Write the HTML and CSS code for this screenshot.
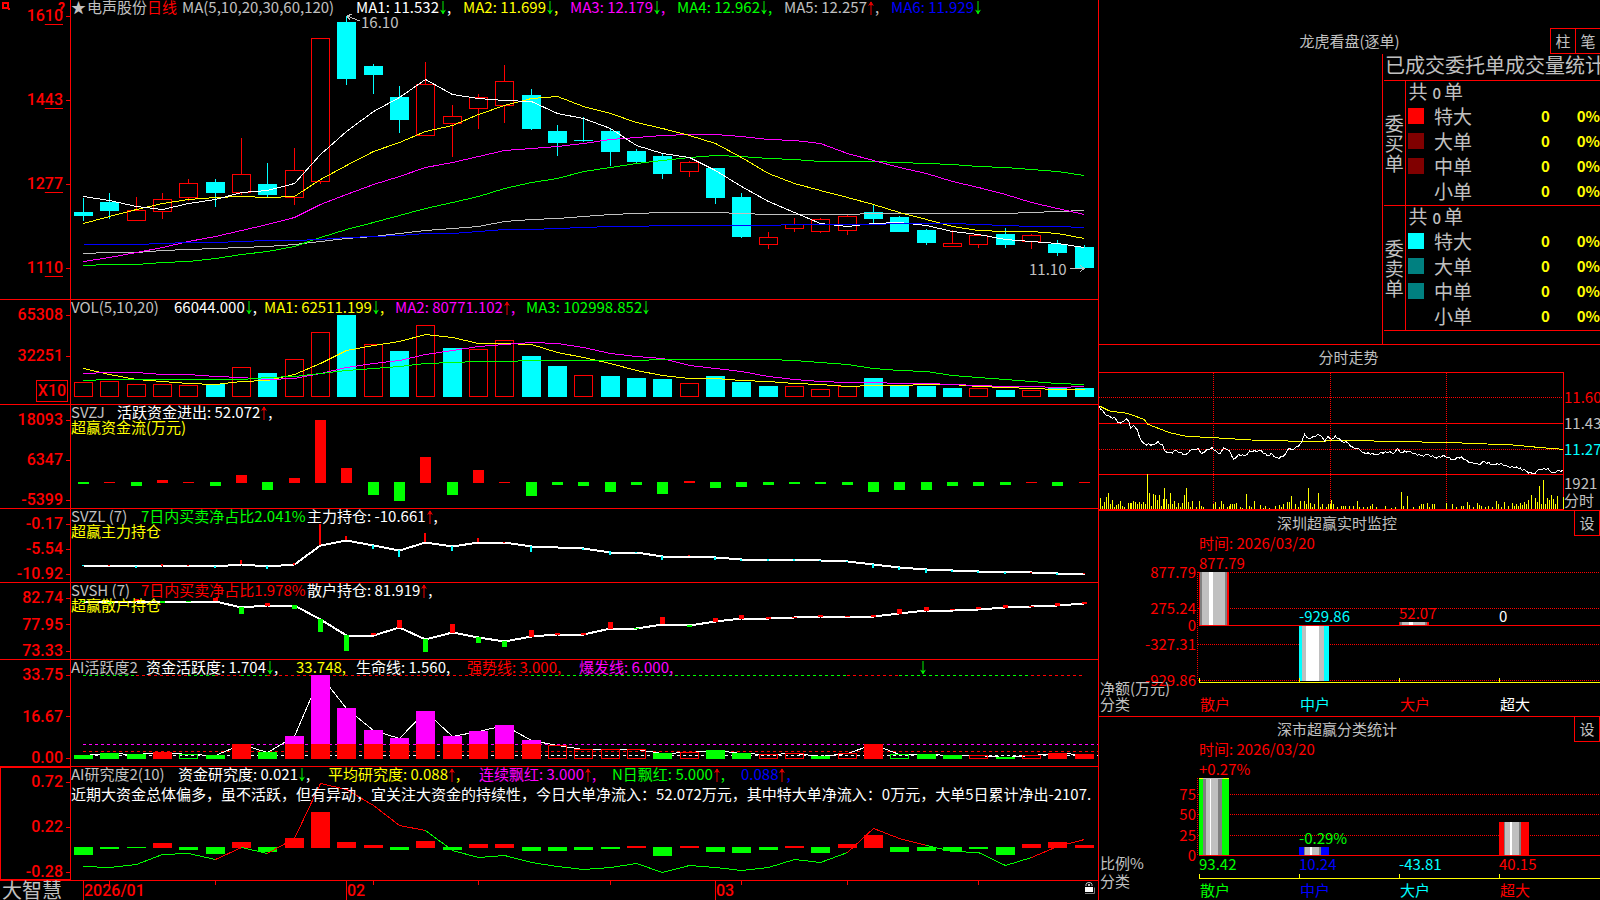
FILE: index.html
```html
<!DOCTYPE html>
<html lang="zh-CN">
<head>
<meta charset="utf-8">
<title>电声股份 日线</title>
<link rel="stylesheet" href="styles.css">
</head>
<body>
<svg class="defs" aria-hidden="true">
  <symbol id="down" viewBox="0 0 6 15"><path d="M3 0V14M0.5 9.5L3 13.5L5.5 9.5M1.5 11H4.5M2 12H4" fill="none" stroke="currentColor"/></symbol>
  <symbol id="up" viewBox="0 0 6 15"><path d="M3 15V1M0.5 5L3 1L5.5 5M1.5 4H4.5M2 3H4" fill="none" stroke="currentColor"/></symbol>
</svg>
<main class="app">
  <section class="left">
    <article class="panel">
      <div class="axis axis-price">
        <svg class="pin" viewBox="0 0 8 8" aria-hidden="true"><path d="M0 0H7V7H0ZM2 2V5H5V2Z" fill-rule="evenodd"/><path d="M6 6h2v2h-2z"/></svg>
        <b class="help">?</b>
        <span>16<u>10</u></span><span>14<u>43</u></span><span>12<u>77</u></span><span>11<u>10</u></span>
      </div>
      <div class="plot">
        <svg class="chart" id="price" viewBox="71 0 1027 299" preserveAspectRatio="none"></svg>
        <header class="head head-price gray">
          <span>★</span><span>电声股份</span><span class="red">日线</span><span>MA(5,10,20,30,60,120)</span>
          <span class="white">MA1: 11.532<svg class="arrow green"><use href="#down"/></svg>,</span>
          <span class="yellow">MA2: 11.699<svg class="arrow green"><use href="#down"/></svg>,</span>
          <span class="magenta">MA3: 12.179<svg class="arrow green"><use href="#down"/></svg>,</span>
          <span class="green">MA4: 12.962<svg class="arrow green"><use href="#down"/></svg>,</span>
          <span>MA5: 12.257<svg class="arrow red"><use href="#up"/></svg>,</span>
          <span class="blue">MA6: 11.929<svg class="arrow green"><use href="#down"/></svg></span>
        </header>
      </div>
    </article>

    <article class="panel">
      <div class="axis axis-vol"><span>65308</span><span>32251</span><strong>X10</strong></div>
      <div class="plot">
        <svg class="chart" id="vol" viewBox="71 300 1027 104" preserveAspectRatio="none"></svg>
        <header class="head head-vol gray">
          <span>VOL(5,10,20)</span>
          <span class="white">66044.000<svg class="arrow green"><use href="#down"/></svg>,</span>
          <span class="yellow">MA1: 62511.199<svg class="arrow green"><use href="#down"/></svg>,</span>
          <span class="magenta">MA2: 80771.102<svg class="arrow red"><use href="#up"/></svg>,</span>
          <span class="green">MA3: 102998.852<svg class="arrow green"><use href="#down"/></svg></span>
        </header>
      </div>
    </article>

    <article class="panel">
      <div class="axis"><span>18093</span><span>6347</span><span>-5399</span></div>
      <div class="plot">
        <svg class="chart" id="flow" viewBox="71 405 1027 103" preserveAspectRatio="none"></svg>
        <header class="head head-flow gray">
          <span>SVZJ</span><span class="white">活跃资金进出: 52.072<svg class="arrow red"><use href="#up"/></svg>,</span>
        </header>
        <p class="sub yellow">超赢资金流(万元)</p>
      </div>
    </article>

    <article class="panel">
      <div class="axis"><span>-0.17</span><span>-5.54</span><span>-10.92</span></div>
      <div class="plot">
        <svg class="chart" id="main-hold" viewBox="71 509 1027 73" preserveAspectRatio="none"></svg>
        <header class="head head-hold gray">
          <span>SVZL (7)</span><span class="green">7日内买卖净占比2.041%</span><span class="white">主力持仓: -10.661<svg class="arrow red"><use href="#up"/></svg>,</span>
        </header>
        <p class="sub yellow">超赢主力持仓</p>
      </div>
    </article>

    <article class="panel">
      <div class="axis"><span>82.74</span><span>77.95</span><span>73.33</span></div>
      <div class="plot">
        <svg class="chart" id="retail-hold" viewBox="71 583 1027 76" preserveAspectRatio="none"></svg>
        <header class="head head-hold gray">
          <span>SVSH (7)</span><span class="red">7日内买卖净占比1.978%</span><span class="white">散户持仓: 81.919<svg class="arrow red"><use href="#up"/></svg>,</span>
        </header>
        <p class="sub yellow">超赢散户持仓</p>
      </div>
    </article>

    <article class="panel">
      <div class="axis"><span>33.75</span><span>16.67</span><span>0.00</span></div>
      <div class="plot">
        <svg class="chart" id="active" viewBox="71 660 1027 106" preserveAspectRatio="none"></svg>
        <header class="head head-active gray">
          <span>AI活跃度2</span>
          <span class="white">资金活跃度: 1.704<svg class="arrow green"><use href="#down"/></svg>,</span>
          <span class="yellow">33.748,</span><span class="white">生命线: 1.560,</span>
          <span class="red">强势线: 3.000,</span><span class="magenta">爆发线: 6.000,</span>
          <span><svg class="arrow green"><use href="#down"/></svg></span>
        </header>
      </div>
    </article>

    <article class="panel">
      <div class="axis selected"><span>0.72</span><span>0.22</span><span>-0.28</span></div>
      <div class="plot">
        <svg class="chart" id="research" viewBox="71 767 1027 113" preserveAspectRatio="none"></svg>
        <header class="head head-research gray">
          <span>AI研究度2(10)</span>
          <span class="white">资金研究度: 0.021<svg class="arrow green"><use href="#down"/></svg>,</span>
          <span class="yellow">平均研究度: 0.088<svg class="arrow red"><use href="#up"/></svg>,</span>
          <span class="magenta">连续飘红: 3.000<svg class="arrow red"><use href="#up"/></svg>,</span>
          <span class="green">N日飘红: 5.000<svg class="arrow red"><use href="#up"/></svg>,</span>
          <span class="blue">0.088<svg class="arrow red"><use href="#up"/></svg>,</span>
        </header>
        <p class="sub note white">近期大资金总体偏多，虽不活跃，但有异动，宜关注大资金的持续性，今日大单净流入：52.072万元，其中特大单净流入：0万元，大单5日累计净出-2107.</p>
      </div>
    </article>

    <footer class="dates">
      <span class="brand gray">大智慧</span>
      <div class="plot">
        <svg class="chart" id="dates" viewBox="71 881 1027 19" preserveAspectRatio="none">
          <text class="date" x="84" y="896">2026/01</text>
          <text class="date" x="347" y="896">02</text>
          <text class="date" x="716" y="896">03</text>
          <path d="M1086 886V884.5Q1086 882.5 1089 882.5T1092 884.5V886" fill="none" stroke="#c0c0c0"/>
          <path d="M1088 884h2v2h-2z" fill="#c0c0c0"/>
          <path d="M1085 893.5h9.500v-6" fill="none" stroke="#808080"/>
          <path d="M1085 887h8v5h-8z" fill="#fff"/>
        </svg>
      </div>
    </footer>
  </section>

  <aside class="right">
    <section class="orders">
      <div class="orders-bar">
        <h2>龙虎看盘(逐单)</h2>
        <div class="buttons"><button type="button">柱</button><button type="button">笔</button></div>
      </div>
      <div class="orders-table">
        <h3 id="orders-title">已成交委托单成交量统计</h3>
        <table aria-labelledby="orders-title">
          <colgroup><col class="c-side"><col class="c-mark"><col class="c-name"><col class="c-num"><col class="c-pct"></colgroup>
          <tbody>
            <tr><th rowspan="5" class="side">委买单</th><td colspan="4" class="total">共<b>0</b>单</td></tr>
            <tr><td><i class="mark m-red"></i></td><td>特大</td><td class="num">0</td><td class="num">0%</td></tr>
            <tr><td><i class="mark m-dred"></i></td><td>大单</td><td class="num">0</td><td class="num">0%</td></tr>
            <tr><td><i class="mark m-dred"></i></td><td>中单</td><td class="num">0</td><td class="num">0%</td></tr>
            <tr><td></td><td>小单</td><td class="num">0</td><td class="num">0%</td></tr>
          </tbody>
          <tbody>
            <tr><th rowspan="5" class="side">委卖单</th><td colspan="4" class="total">共<b>0</b>单</td></tr>
            <tr><td><i class="mark m-cyan"></i></td><td>特大</td><td class="num">0</td><td class="num">0%</td></tr>
            <tr><td><i class="mark m-teal"></i></td><td>大单</td><td class="num">0</td><td class="num">0%</td></tr>
            <tr><td><i class="mark m-teal"></i></td><td>中单</td><td class="num">0</td><td class="num">0%</td></tr>
            <tr><td></td><td>小单</td><td class="num">0</td><td class="num">0%</td></tr>
          </tbody>
        </table>
      </div>
    </section>

    <section class="intraday">
      <h2>分时走势</h2>
      <div class="intraday-body">
        <svg id="intraday" viewBox="1099 372 465 138" preserveAspectRatio="none"></svg>
        <ul class="scale">
          <li class="red">11.60</li><li class="gray">11.43</li><li class="cyan">11.27</li><li class="gray">1921</li><li class="gray">分时</li>
        </ul>
      </div>
    </section>

    <section class="stat">
      <div class="stat-bar"><h2>深圳超赢实时监控</h2><button type="button">设</button></div>
      <svg id="monitor" viewBox="1099 535 501 181" preserveAspectRatio="xMinYMin meet"></svg>
    </section>

    <section class="stat">
      <div class="stat-bar"><h2>深市超赢分类统计</h2><button type="button">设</button></div>
      <svg id="classes" viewBox="1099 741 501 159" preserveAspectRatio="xMinYMin meet"></svg>
    </section>
  </aside>
</main>
<script src="charts.js"></script>
</body>
</html>
```

FILE: styles.css
```css
* { box-sizing: border-box; margin: 0; padding: 0; }
body {
  background: #000;
  color: #c0c0c0;
  font: 15px/16px "Noto Sans CJK SC", "Liberation Sans", sans-serif;
  overflow: hidden;
}
.defs { display: none; }
.app {
  display: grid;
  grid-template-columns: minmax(0, 1098fr) minmax(0, 502fr);
  height: 100vh;
}
.red { color: #f00; }
.green { color: #0f0; }
.blue { color: #00f; }
.yellow { color: #ff0; }
.magenta { color: #f0f; }
.cyan { color: #0ff; }
.white { color: #fff; }
.gray { color: #c0c0c0; }

/* left: indicator panels */
.left {
  display: grid;
  grid-template-rows: 300fr 105fr 104fr 74fr 77fr 107fr 114fr 19fr;
  min-height: 0;
}
.panel {
  display: grid;
  grid-template-columns: 71px minmax(0, 1fr);
  min-height: 0;
  border-bottom: 1px solid #f00;
}
.axis {
  display: flex;
  flex-direction: column;
  justify-content: space-between;
  position: relative;
  min-height: 0;
  padding-top: 7px;
  border-right: 1px solid #f00;
  color: #f00;
  font: 500 16px/16px Roboto, "Liberation Sans", sans-serif;
}
.axis span { display: flex; justify-content: flex-end; align-items: center; }
.axis span::after { content: ""; width: 4px; height: 1px; margin-left: 3px; background: #f00; }
.axis u { text-underline-offset: 3px; text-decoration-thickness: 1px; }
.axis-price { padding: 8px 0 23px; }
.pin { position: absolute; left: 2px; top: 2px; width: 8px; height: 8px; fill: #f00; }
.help { position: absolute; right: 5px; top: 0; font-size: 14px; }
.axis-vol { justify-content: flex-start; }
.axis-vol span + span { margin-top: 25px; }
.axis-vol strong {
  align-self: flex-end;
  width: 32px;
  margin: 16px 2px 0 0;
  border: 1px solid #f00;
  font-weight: 500;
  line-height: 20px;
  text-align: center;
}
.selected { outline: 1px solid #f00; outline-offset: -1px; }
.plot { position: relative; min-width: 0; min-height: 0; overflow: hidden; }
.chart { position: absolute; inset: 0; width: 100%; height: 100%; }
.head, .sub { position: relative; white-space: nowrap; }
.head { display: grid; grid-auto-flow: column; justify-content: start; height: 15px; line-height: 14px; }
.arrow { display: inline-block; width: 6px; height: 14px; margin: 0 1px; vertical-align: -2px; }
.sub { line-height: 14px; }
.note { margin-top: 3px; line-height: 18px; }
.head-price { grid-template-columns: 16px 60px 35px 174px 107px 107px 107px 107px 107px auto; }
.head-vol { grid-template-columns: 103px 90px 131px 131px auto; }
.head-flow { grid-template-columns: 46px auto; }
.head-hold { grid-template-columns: 70px 166px auto; }
.head-active { grid-template-columns: 75px 150px 60px 111px 112px 340px auto; }
.head-research { grid-template-columns: 107px 150px 151px 133px 129px auto; }
.dates { display: grid; grid-template-columns: 71px minmax(0, 1fr); min-height: 0; }
.brand { padding-left: 2px; font-size: 20px; line-height: 17px; }
.date { fill: #f00; font: 500 16px Roboto, "Liberation Sans", sans-serif; }

/* right: order statistics */
.right {
  display: grid;
  grid-template-rows: 345fr 166fr 206fr 183fr;
  min-height: 0;
  border-left: 1px solid #f00;
}
.right section { min-height: 0; overflow: hidden; }
h2 { font-size: 15px; font-weight: 400; text-align: center; }
button {
  width: 26px;
  height: 26px;
  border: 1px solid #f00;
  background: #000;
  color: #c0c0c0;
  font: inherit;
  line-height: 22px;
}
.orders { display: flex; flex-direction: column; border-bottom: 1px solid #f00; }
.orders-bar { position: relative; flex: none; height: 54px; padding-top: 32px; }
.orders-bar h2 { line-height: 17px; }
.buttons { position: absolute; right: -1px; top: 28px; display: flex; }
.buttons button + button { margin-left: -1px; }
.orders-table { flex: 1; width: 218px; margin-left: auto; padding-left: 1px; border-left: 1px solid #f00; overflow: hidden; }
table { width: 100%; table-layout: fixed; border-collapse: collapse; font-size: 19px; line-height: 20px; }
h3 { height: 26px; padding-left: 1px; font-size: 20px; font-weight: 400; line-height: 22px; white-space: nowrap; }
tbody { border-top: 1px solid #f00; border-bottom: 1px solid #f00; }
tr { height: 25px; }
td { vertical-align: top; }
.side { border-right: 1px solid #f00; font-weight: 400; word-break: break-all; }
.total { padding-left: 3px; }
.total b { margin: 0 3px 0 5px; font-size: 15px; font-weight: 500; }
.c-side { width: 21px; }
.c-mark { width: 29px; }
.c-name { width: 45px; }
.c-pct { width: 50px; }
.mark { display: block; width: 16px; height: 16px; margin: 2px 0 0 2px; }
.m-red { background: #f00; }
.m-dred { background: #800000; }
.m-cyan { background: #0ff; }
.m-teal { background: #008080; }
.num { color: #ff0; font: 700 15px/20px "Noto Sans CJK SC", sans-serif; text-align: right; }

/* right: intraday */
.intraday { display: flex; flex-direction: column; border-bottom: 1px solid #f00; }
.intraday h2 { flex: none; height: 27px; padding-right: 2px; line-height: 23px; }
.intraday-body {
  display: grid;
  grid-template-columns: minmax(0, 1fr) 36px;
  grid-template-rows: minmax(0, 1fr);
  flex: 1;
  min-height: 0;
}
.intraday-body svg { width: 100%; height: 100%; }
.scale { list-style: none; padding-top: 15px; white-space: nowrap; }
.scale li { height: 26px; line-height: 20px; }
.scale li:nth-child(3) { height: 34px; }
.scale li:nth-child(4) { height: 17px; }
.scale li:nth-child(5) { height: 20px; }

/* right: category statistics */
.stat { display: flex; flex-direction: column; }
.stat:not(:last-child) { border-bottom: 1px solid #f00; }
.stat-bar { position: relative; flex: none; height: 24px; }
.stat-bar h2 { padding-right: 25px; line-height: 24px; }
.stat-bar button { position: absolute; right: 0; top: -1px; }
.stat svg { flex: 1; width: 100%; min-height: 0; }
svg text { font-size: 15px; }
svg .date { font-size: 16px; }
```

FILE: charts.js
```javascript
const NS = 'http://www.w3.org/2000/svg';
const C = { r: '#f00', g: '#0f0', c: '#0ff', m: '#f0f', w: '#fff', y: '#ff0', b: '#00f', s: '#c0c0c0', d: '#808080' };

function add(svg, tag, attrs, text) {
  const el = document.createElementNS(NS, tag);
  for (const k in attrs) el.setAttribute(k, attrs[k]);
  if (text !== undefined) el.textContent = text;
  svg.append(el);
  return el;
}
const get = id => document.getElementById(id);
const day = i => Math.round(83 + 26.33 * i);
const box = (svg, x, y, w, h, fill) => add(svg, 'rect', { x, y, width: w, height: h, fill, 'shape-rendering': 'crispEdges' });
const frame = (svg, x, y, w, h, stroke) => add(svg, 'rect', {
  x: x + 0.5, y: y + 0.5, width: w - 1, height: h - 1, fill: 'none', stroke, 'shape-rendering': 'crispEdges' });
const path = (svg, pts, stroke, more = {}) => add(svg, 'polyline', {
  points: pts.map(p => p.join()).join(' '), fill: 'none', stroke, 'shape-rendering': 'crispEdges', ...more });
const series = (svg, ys, stroke, more) => path(svg, ys.map((y, i) => [day(i) + 0.5, y + 0.5]), stroke, more);

/* daily candles: kind, body top, body bottom, high, low */
const candles = `c212,216,198,221 c202,211,193,219 r210,220,197,221 r199,211,193,219 r183,197,179,201 c182,193,179,207
r174,192,138,195 c184,195,163,197 r170,197,148,205 r38,181,38,184 c22,79,16,85 c66,75,64,94 c97,120,86,133
r84,135,62,135 r116,123,105,157 r97,108,94,129 r81,105,65,123 c95,129,89,130 c131,143,125,156 c140,141,117,142
c131,152,128,166 c151,162,149,163 c156,174,153,179 r162,171,161,177 c168,198,168,204 c197,237,193,238
r237,244,232,249 r224,228,218,232 r219,231,218,233 r216,230,215,235 c212,219,204,223 c217,232,216,232
c230,243,229,245 r243,246,230,247 r235,244,235,248 c234,245,228,248 r235,241,234,249 c244,253,240,256
c247,268,245,268`.split(/\s+/);
const price = get('price');
candles.forEach((s, i) => {
  const [t, b, hi, lo] = s.slice(1).split(',').map(Number);
  const x = day(i), col = C[s[0]];
  if (s[0] === 'c') {
    box(price, x, hi, 1, lo - hi, col);
    box(price, x - 9, t, 19, b - t, col);
  } else {
    box(price, x, hi, 1, t - hi, col);
    box(price, x, b, 1, lo - b, col);
    frame(price, x - 9, t, 19, b - t + 1, col);
  }
});
series(price, [253,252,252,250,249,248,247,246,244,241,238,236,233,230,228,226,221,219,218,216,214,213,212,212,212,213,214,214,214,214,213,213,213,213,213,213,212,211,210], C.s);
series(price, [265,264,264,262,261,258,254,251,246,237,229,222,215,208,202,196,188,182,178,171,167,163,160,157,155,156,158,159,161,161,161,162,163,164,166,167,169,171,175], C.g);
series(price, [261,257,252,247,241,236,230,224,217,204,194,184,176,167,162,156,150,148,146,143,139,137,135,134,134,136,139,140,143,153,160,167,173,181,187,194,202,208,214], C.m);
series(price, [223,216,209,203,199,197,196,197,196,179,165,151,142,131,125,114,105,98,96,106,113,122,128,135,143,157,173,183,190,197,204,212,219,226,230,231,231,233,238], C.y);
series(price, [196,200,206,209,203,199,192,190,183,154,131,111,97,79,94,98,100,101,113,118,128,145,153,157,170,186,201,212,223,226,223,222,225,231,234,239,241,243,247], C.w);
series(price, [244,244,244,243,242,242,241,240,240,239,237,236,235,233,233,231,229,229,228,227,226,226,225,225,225,225,225,224,224,224,224,223,223,223,224,225,226,226,227], C.b);
path(price, [[360, 21], [347, 16]], C.s);
path(price, [[352, 14], [347, 16], [350, 20]], C.s);
path(price, [[1070, 268.5], [1084, 268.5]], C.s);
path(price, [[1080, 265], [1084, 268.5], [1080, 272]], C.s);
add(price, 'text', { x: 361, y: 28, fill: C.s }, '16.10');
add(price, 'text', { x: 1029, y: 275, fill: C.s }, '11.10');

/* volume */
const vol = get('vol');
`r382 r381 r384 r384 r385 c384 r367 c373 r359 r332 c315 r344 c351 r325 c348 r349 r340 c356 c366 r375 c376 c378 c379
r383 c376 c382 c386 r386 r389 r386 c378 c386 c386 c388 r388 c390 r390 c388 c388`.split(/\s+/).forEach((s, i) => {
  const y = +s.slice(1);
  (s[0] === 'r' ? frame : box)(vol, day(i) - 9, y, 19, 397 - y, C[s[0]]);
});
series(vol, [368,374,379,381,383,384,381,380,374,363,350,345,341,334,337,343,343,344,352,357,363,370,375,378,378,380,381,383,384,386,385,385,384,384,386,387,388,389,389], C.y);
series(vol, [373,372,372,374,374,376,377,379,378,373,367,363,360,354,350,346,344,342,343,347,353,356,358,365,368,371,376,379,381,382,382,383,383,384,385,386,386,387,386], C.m);
series(vol, [380,379,379,379,379,379,379,377,376,373,370,368,366,363,362,361,361,360,360,360,360,360,359,359,359,359,359,360,362,364,368,370,371,375,377,379,381,383,384], C.g);

/* bars on a zero line: red ones end one pixel under it */
function zeroBars(svg, text, zero, width) {
  text.split(/\s+/).forEach((s, i) => {
    const y = +s.slice(1), x = day(i) - (width - 1) / 2;
    if (s[0] === 'r') box(svg, x, y, width, zero + 1 - y, C.r);
    else box(svg, x, zero, width, y - zero, C.g);
  });
}
zeroBars(get('flow'), `g484 r482 g486 r480 r482 g486 r475 g490 r478 r420 r468 g495 g501 r457 g495 r470 r482 g496 g485 g486
g492 g485 g494 r481 g488 g487 g485 g484 g484 g485 g492 g490 g490 g486 g486 g485 r482 g486 r482`, 482, 11);

/* holdings */
function ticks(svg, text, w) {
  text.split(/\s+/).forEach(s => {
    const [i, a, b] = s.slice(1).split(',').map(Number);
    box(svg, day(i) - (w >> 1), a, w, b - a, C[s[0]]);
  });
}
const mh = get('main-hold');
series(mh, [565,565,566,565,565,566,564,566,564,545,540,545,550,542,546,542,542,546,547,548,552,552,556,556,557,559,559,559,560,561,564,567,569,570,571,571,572,573,573], C.w, { 'stroke-width': 2 });
ticks(mh, `r9,524,545 r10,536,540 r13,533,542 r15,538,542 r6,560,564 c11,545,549 c12,550,557 c14,546,551 c17,546,552
c20,551,555 c22,556,560 c24,557,560 c30,564,568 c31,567,570 c32,569,573 c7,566,569 c0,565,566 c2,566,568 c5,566,568
c19,548,550 c25,559,561 c26,559,561 c27,559,561 c34,571,573 c35,572,574 c37,573,575 r1,565,566 r3,564,566 r4,565,566
r8,563,565 r16,542,543 r23,555,556 r36,572,573 r38,573,574 c21,552,553 c28,560,561 c29,561,562 c33,570,572`, 2);
const rh = get('retail-hold');
series(rh, [601,602,601,601,601,601,607,605,605,619,635,635,627,639,632,637,641,636,634,634,628,628,624,625,621,618,618,617,616,616,616,613,610,610,609,607,606,605,603], C.w, { 'stroke-width': 2 });
ticks(rh, `g6,607,614 g9,619,632 g10,635,651 g13,639,652 g15,637,643 g16,641,647 g8,605,609 r2,599,601 r5,598,601
r7,603,606 r12,620,628 r14,624,633 r17,630,637 r18,633,635 r19,633,635 r20,622,629 r22,617,624 r24,618,622 r25,615,619
r26,617,619 r28,615,617 r30,615,617 r31,609,614 r32,607,611 r34,607,609 r35,605,608 r37,603,606 r38,602,604 g0,601,602
g1,602,604 g3,601,603 g4,601,602 g21,628,629 g23,625,627 r11,633,635 r27,617,618 r29,616,617 r33,609,610 r36,606,607`, 5);

/* activity: upper case letters are hollow bars */
const act = get('active');
const dash = { 'stroke-dasharray': '3 3' };
[[0, 2, 'g'], [2, 4, 'r'], [4, 5, 'g'], [5, 6, 'r'], [6, 7, 'g'], [7, 17, 'r'], [17, 29, 'g'], [29, 31, 'r'], [31, 36, 'g'], [36, 38, 'r']]
  .forEach(([a, b, c]) => path(act, [[day(a), 675.5], [day(b), 675.5]], C[c], dash));
path(act, [[83, 744.5], [1098, 744.5]], C.m, dash);
path(act, [[83, 751.5], [1098, 751.5]], C.r, dash);
path(act, [[83, 755.5], [1098, 755.5]], C.w, dash);
const bars = `g755 g753 g754 r752 G754 g755 r744 g752 m736 m675 m708 m730 m738 m711 m736 m731 m725 m740 R745 R749 R749 R749
g753 R752 g750 g753 R754 R753 g756 R753 r744 G754 g754 g755 R755 g757 R755 r753 r754`.split(/\s+/);
series(act, bars.map(s => +s.slice(1)), C.w);
bars.forEach((s, i) => {
  const y = +s.slice(1), x = day(i) - 9, k = s[0];
  if (k === 'R' || k === 'G') frame(act, x, y, 19, 759 - y, C[k.toLowerCase()]);
  else box(act, x, y, 19, 759 - y, C[k]);
  if (k === 'm') box(act, x, 744, 19, 15, C.r);
});

/* research */
const res = get('research');
zeroBars(res, `g855 g849 g848 r843 g850 g854 r842 g852 r838 r812 r842 r845 g850 r841 g850 r844 r844 g851 g851 g850 g849 r846
g856 r846 g852 g853 g850 r846 g853 r844 r835 g852 g851 g851 g849 g855 r844 r842 r845`, 847, 19);
const trend = [866,867,864,854,853,859,847,853,838,783,789,805,825,830,850,857,855,862,866,869,867,863,872,865,867,870,867,859,862,852,828,838,845,851,852,865,857,846,839];
[[0, 5, 'g'], [5, 6, 'r'], [6, 7, 'g'], [7, 13, 'r'], [13, 29, 'g'], [29, 32, 'r'], [32, 36, 'g'], [36, 38, 'r']].forEach(([a, b, c]) =>
  path(res, trend.slice(a, b + 1).map((y, k) => [day(a + k) + 0.5, y + 0.5]), C[c]));

/* date marks */
const dates = get('dates');
[0, 10, 24].forEach(i => box(dates, day(i), 881, 1, 19, C.r));
[1, 5, 11, 15, 20, 25, 29, 34].forEach(i => box(dates, day(i), 881, 1, 4, C.r));

/* intraday; source data is on a grid three times finer than the drawing */
const fine = s => s.split(' ').map(p => { const [x, y] = p.split(',').map(Number); return [1098 + x / 3, 340 + y / 3]; });
const intra = get('intraday');
const dots = { 'stroke-dasharray': '1 1' };
frame(intra, 1098, 372, 466, 138, C.r);
[423, 474].forEach(y => box(intra, 1099, y, 465, 1, C.r));
[397.5, 449.5].forEach(y => path(intra, [[1099, y], [1563, y]], C.r, dots));
[1213.5, 1330.5, 1446.5].forEach(x => path(intra, [[x, 373], [x, 509]], C.r, dots));
fine('7,474 13,498 19,486 25,471 31,459 37,492 43,480 49,502 55,495 61,492 67,483 73,498 79,502 91,489 97,489 100,489 106,483 112,486 118,492 124,486 130,492 136,486 142,492 148,402 154,459 160,498 166,462 172,465 178,480 184,465 190,498 196,477 199,444 205,477 211,492 217,459 223,492 229,483 235,500 241,489 247,501 253,489 259,465 265,444 271,486 277,500 283,483 295,502 305,483 310,498 317,502 346,492 352,486 364,502 370,483 376,492 388,502 394,498 397,492 403,492 409,492 415,489 427,501 433,503 445,462 454,498 460,502 469,483 487,495 496,503 502,498 514,503 532,498 544,495 550,502 556,492 568,486 574,486 580,468 592,492 601,500 607,483 619,483 625,492 631,444 637,489 643,500 649,492 661,459 667,500 673,492 685,500 691,492 697,492 700,480 706,492 718,502 730,498 736,498 742,498 754,498 766,498 778,483 784,500 796,502 808,502 817,498 823,492 835,502 862,498 880,503 892,502 910,456 916,498 928,468 946,502 964,498 970,492 976,492 988,489 994,500 1003,492 1009,492 1045,489 1063,492 1075,502 1090,498 1096,498 1108,486 1114,495 1126,500 1138,489 1144,495 1150,498 1162,502 1172,498 1184,500 1195,483 1201,492 1210,500 1219,486 1231,498 1243,489 1249,498 1255,492 1261,498 1267,489 1273,495 1279,486 1285,492 1291,480 1300,465 1312,474 1318,486 1324,438 1330,492 1336,420 1342,492 1348,474 1354,480 1360,465 1366,477 1372,492 1378,468 1396,470')
  .forEach(([x, y]) => box(intra, Math.floor(x), Math.round(y), 1, 509 - Math.round(y), C.y));
path(intra, fine('2,197 35,213 88,220 138,238 150,253 215,278 265,289 345,293 460,300 570,303 685,303 775,302 925,305 1065,308 1245,315 1320,322 1395,328'), C.y);
const minute = fine('2,198 20,220 38,232 50,232 60,247 75,245 85,237 92,243 98,265 107,257 118,270 130,303 140,312 165,313 180,305 193,313 200,332 217,338 235,332 262,343 283,328 300,325 310,340 325,330 342,323 355,333 367,340 377,323 385,328 395,333 407,357 422,343 440,347 455,333 490,332 508,347 520,340 537,353 555,350 572,325 580,328 600,320 610,307 620,283 635,297 645,290 660,283 670,288 680,303 690,290 700,298 712,288 730,303 750,308 765,322 785,328 798,338 835,342 862,335 890,338 898,325 908,338 920,332 940,337 970,347 990,343 1010,352 1040,348 1065,357 1090,350 1110,365 1140,372 1160,365 1185,373 1210,370 1230,380 1255,380 1285,393 1305,402 1325,387 1350,386 1365,398 1380,391 1396,391');
const walk = [];
minute.forEach((p, i) => {
  walk.push(p);
  const q = minute[i + 1];
  if (!q) return;
  const n = Math.floor((q[0] - p[0]) / 2);
  for (let k = 1; k < n; k++) {
    walk.push([p[0] + (q[0] - p[0]) * k / n, p[1] + (q[1] - p[1]) * k / n + (k % 2 ? 1 : -0.5)]);
  }
});
path(intra, walk, C.w);

/* category charts */
function column(svg, x, y, h, stripes) {
  stripes.split(' ').forEach(s => {
    const w = +s.slice(1);
    box(svg, x, y, w, h, C[s[0]]);
    x += w;
  });
}
const label = (svg, x, y, t, c, anchor = 'start') => add(svg, 'text', { x, y: y + 5, fill: C[c], 'text-anchor': anchor }, t);
function base(svg, y) {
  box(svg, 1199, y, 401, 1, C.y);
  [1199, 1299, 1399, 1499].forEach(x => box(svg, x, y - 4, 1, 4, C.y));
}
const mon = get('monitor');
label(mon, 1199, 544, '时间: 2026/03/20', 'r');
[[573, '877.79'], [609, '275.24'], [626, '0'], [645, '-327.31'], [681, '-929.86']].forEach(([y, t]) => label(mon, 1196, y, t, 'r', 'end'));
[572.5, 608.5, 644.5, 680.5].forEach(y => path(mon, [[1198, y], [1600, y]], C.r, dots));
path(mon, [[1197.5, 572], [1197.5, 680]], C.r, dots);
column(mon, 1199, 572, 53, 'r1 d2 s7 w4 s12 d2 r2');
column(mon, 1299, 626, 55, 'c3 s4 w13 s5 c5');
column(mon, 1399, 622, 3, 'r1 d2 s7 w4 s12 d2 r2');
box(mon, 1199, 625, 401, 1, C.r);
label(mon, 1199, 564, '877.79', 'r');
label(mon, 1299, 617, '-929.86', 'c');
label(mon, 1399, 614, '52.07', 'r');
label(mon, 1499, 617, '0', 'w');
base(mon, 682);
label(mon, 1100, 689, '净额(万元)', 's');
label(mon, 1100, 705, '分类', 's');
[['散户', 'r'], ['中户', 'c'], ['大户', 'r'], ['超大', 'w']].forEach(([t, c], i) => label(mon, 1200 + 100 * i, 705, t, c));

const cls = get('classes');
label(cls, 1199, 750, '时间: 2026/03/20', 'r');
[[795, '75'], [815, '50'], [836, '25'], [856, '0']].forEach(([y, t]) => label(cls, 1196, y, t, 'r', 'end'));
[794.5, 814.5, 835.5].forEach(y => path(cls, [[1198, y], [1600, y]], C.r, dots));
path(cls, [[1197.5, 778], [1197.5, 855]], C.r, dots);
column(cls, 1199, 778, 77, 'g4 d3 s4 w1 s7 d4 g7');
column(cls, 1199, 778, 1, 'y4 s20 y6');
column(cls, 1299, 847, 8, 'b5 d1 s5 w2 s7 d2 b8');
column(cls, 1499, 822, 33, 'r5 d1 s5 w2 s7 d2 r8');
box(cls, 1199, 855, 401, 1, C.r);
label(cls, 1199, 770, '+0.27%', 'r');
label(cls, 1299, 839, '-0.29%', 'g');
[['93.42', 'g'], ['10.24', 'b'], ['-43.81', 'c'], ['40.15', 'r']].forEach(([t, c], i) => label(cls, 1199 + 100 * i, 865, t, c));
base(cls, 878);
label(cls, 1100, 864, '比例%', 's');
label(cls, 1100, 882, '分类', 's');
[['散户', 'g'], ['中户', 'b'], ['大户', 'c'], ['超大', 'r']].forEach(([t, c], i) => label(cls, 1200 + 100 * i, 891, t, c));
```
